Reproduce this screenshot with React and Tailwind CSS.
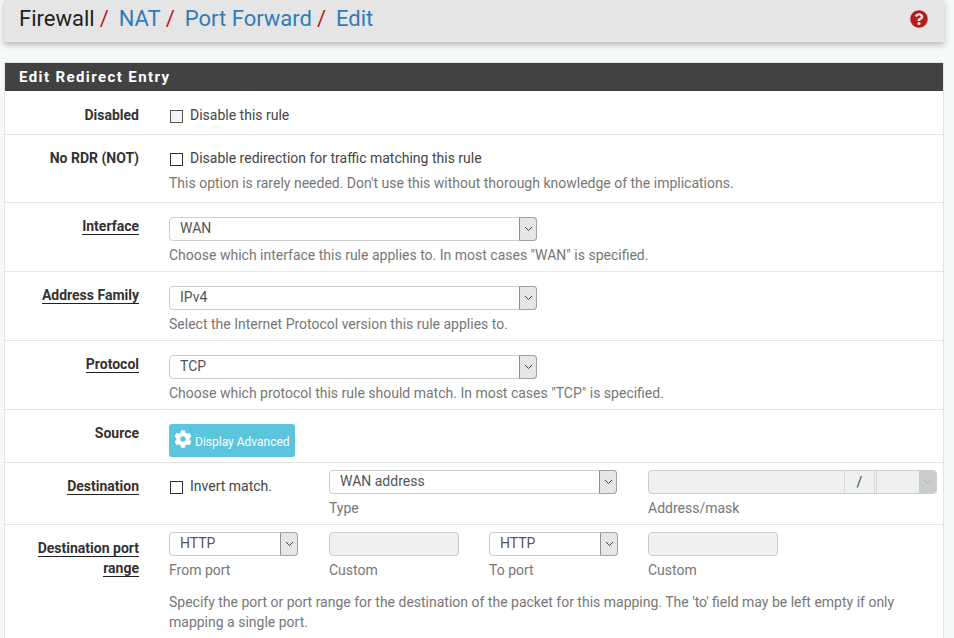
import { FaCog, FaQuestionCircle } from "react-icons/fa";

const Chevron = ({ muted }) => (
  <svg width="9" height="6" viewBox="0 0 9 6" fill="none" stroke={muted ? "#a9afab" : "#444"} strokeWidth="1">
    <path d="M1 1l3.5 3.5L8 1" />
  </svg>
);

const Select = ({ value, className = "" }) => (
  <div className={`flex h-6 shrink-0 items-stretch rounded border border-[#ccc] bg-white ${className}`}>
    <div className="flex-1 pl-[10px] text-[14px] leading-[20px] text-[#555]">{value}</div>
    <div className="-my-px -mr-px flex w-[18px] items-center justify-center rounded-r border border-[#a3a3a3] border-l-[#8e8e8e] bg-[#e6e6e6]">
      <Chevron />
    </div>
  </div>
);

const Checkbox = ({ first }) => (
  <span
    className={`mt-[2px] block h-[13px] w-[13px] shrink-0 border ${first ? "border-[#555] bg-[#f4f4f4]" : "border-[#333] bg-white"}`}
  />
);

const Label = ({ children, linked, className = "" }) => (
  <div className={`w-[134px] shrink-0 text-right text-[14px] font-bold leading-[20px] text-[#333] ${className}`}>
    {linked ? <span className="border-b border-[#222]">{children}</span> : children}
  </div>
);

const Help = ({ children, className = "" }) => (
  <div className={`text-[14px] leading-[20px] text-[#777] ${className}`}>{children}</div>
);

const Row = ({ children, className = "" }) => (
  <div className={`flex border-b border-[#e5e5e5] ${className}`}>{children}</div>
);

const SelectRow = ({ label, value, help }) => (
  <Row className="h-[69px] pt-[14px]">
    <Label linked className="-mt-px">{label}</Label>
    <div className="ml-[30px]">
      <Select value={value} className="w-[368px]" />
      <Help className="mt-[4px]">{help}</Help>
    </div>
  </Row>
);

const Crumb = ({ children, last }) => (
  <>
    <span className="text-[#2f7cb8]">{children}</span>
    {!last && <span className="ml-[5px] mr-[10px] text-[#b71c1c]">/</span>}
  </>
);

export default function App() {
  return (
    <div className="h-[638px] overflow-hidden bg-[#f5f9f7] font-['Roboto',sans-serif]">
      <div className="mx-1 flex h-[42px] w-[940px] items-center justify-between bg-[#e5e5e5] pb-[4px] pl-[15px] pr-4 shadow-[0_3px_6px_rgba(0,0,0,0.25)]">
        <div className="whitespace-nowrap text-[22px] leading-[36px]">
          <span className="text-[#222]">Firewall</span>
          <span className="ml-[5px] mr-[10px] text-[#b71c1c]">/</span>
          <Crumb>NAT</Crumb>
          <Crumb>Port Forward</Crumb>
          <Crumb last>Edit</Crumb>
        </div>
        <FaQuestionCircle className="h-[18px] w-[18px] text-[#b71c1c]" />
      </div>

      <div className="ml-1 mt-5 w-[940px] border-x border-[#e5e5e5] bg-white">
        <div className="flex h-[29px] items-center border-t border-[#e5e5e5] bg-[#424242] pl-[14px] text-[15px] font-bold tracking-[1.4px] text-white">
          Edit Redirect Entry
        </div>

        <Row className="h-[44px] pt-[14px]">
          <Label>Disabled</Label>
          <div className="ml-[30px] flex items-center gap-[7px] self-start pl-px">
            <Checkbox first />
            <span className="text-[14px] leading-[20px] text-[#444]">Disable this rule</span>
          </div>
        </Row>

        <Row className="h-[68px] pt-[13px]">
          <Label>No RDR (NOT)</Label>
          <div className="ml-[30px]">
            <div className="flex items-center gap-[7px] pl-px">
              <Checkbox />
              <span className="text-[14px] leading-[20px] text-[#444]">Disable redirection for traffic matching this rule</span>
            </div>
            <Help className="mt-[5px]">This option is rarely needed. Don't use this without thorough knowledge of the implications.</Help>
          </div>
        </Row>

        <SelectRow label="Interface" value="WAN" help={'Choose which interface this rule applies to. In most cases "WAN" is specified.'} />
        <SelectRow label="Address Family" value="IPv4" help="Select the Internet Protocol version this rule applies to." />
        <SelectRow label="Protocol" value="TCP" help={'Choose which protocol this rule should match. In most cases "TCP" is specified.'} />

        <Row className="h-[53px] pt-[14px]">
          <Label className="-mt-px">Source</Label>
          <div className="ml-[30px] flex h-[33px] w-[126px] items-center rounded-[3px] bg-[#5bc5de] pl-[5px] text-white">
            <FaCog className="-mt-[4px] h-[18px] w-[18px]" />
            <span className="ml-[3px] whitespace-nowrap pt-[3px] text-[12px] leading-[16px]">Display Advanced</span>
          </div>
        </Row>

        <Row className="h-[62px] pt-[13px]">
          <Label linked>Destination</Label>
          <div className="ml-[30px] flex w-[160px] items-center gap-[7px] self-start pl-px">
            <Checkbox />
            <span className="text-[14px] leading-[20px] text-[#444]">Invert match.</span>
          </div>
          <div className="-mt-[6px] w-[319px]">
            <Select value="WAN address" className="w-[288px]" />
            <Help className="mt-[4px]">Type</Help>
          </div>
          <div className="-mt-[6px]">
            <div className="flex h-6 w-[289px] rounded border border-[#ccc] bg-[#eef1ef]">
              <div className="w-[195px]" />
              <div className="flex w-[31px] items-center justify-center border-x border-[#d8d8d8] text-[14px] text-[#444]">/</div>
              <div className="ml-px flex-1 border-l border-[#d8d8d8]" />
              <div className="flex w-[17px] items-center justify-center rounded-r-[3px] bg-[#c9cdca]">
                <Chevron muted />
              </div>
            </div>
            <Help className="mt-[4px]">Address/mask</Help>
          </div>
        </Row>

        <div className="flex pb-8 pt-[7px]">
          <Label linked className="mt-[6px]">Destination port range</Label>
          <div className="ml-[30px]">
            <div className="flex gap-[30px]">
              <div>
                <Select value="HTTP" className="mr-px w-[129px]" />
                <Help className="mt-[4px]">From port</Help>
              </div>
              <div>
                <div className="h-6 w-[130px] rounded border border-[#ccc] bg-[#eef1ef]" />
                <Help className="mt-[4px]">Custom</Help>
              </div>
              <div>
                <Select value="HTTP" className="w-[129px]" />
                <Help className="mt-[4px]">To port</Help>
              </div>
              <div>
                <div className="h-6 w-[130px] rounded border border-[#ccc] bg-[#eef1ef]" />
                <Help className="mt-[4px]">Custom</Help>
              </div>
            </div>
            <Help className="mt-[12px] w-[740px]">
              Specify the port or port range for the destination of the packet for this mapping. The 'to' field may be left empty if only mapping a single port.
            </Help>
          </div>
        </div>
      </div>
    </div>
  );
}
